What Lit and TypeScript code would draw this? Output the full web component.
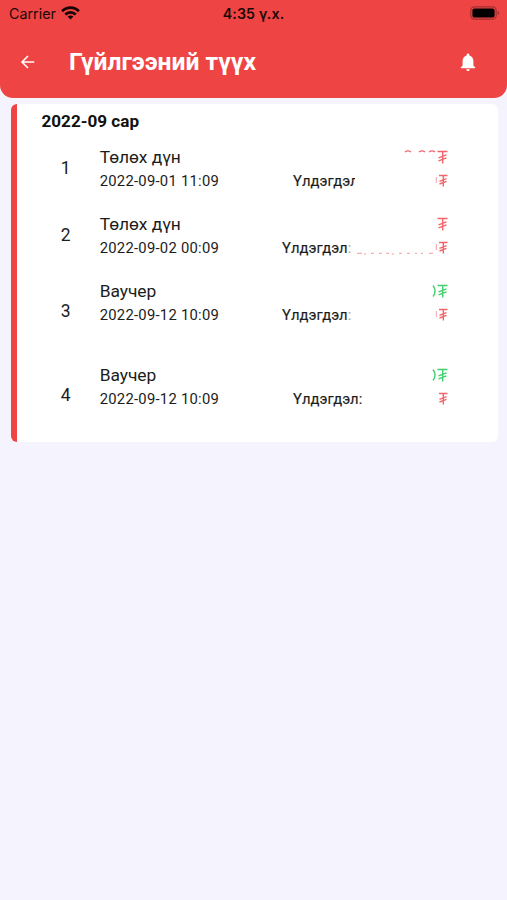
import { LitElement, html, css, svg, nothing } from "lit";
import { customElement, property } from "lit/decorators.js";
import { classMap } from "lit/directives/class-map.js";

interface Entry {
  title: string;
  date: string;
  label: "cut" | "faint" | "full";
  shift: boolean;
  credit: boolean;
  tall: boolean;
  amountTrace: string;
  balanceTrace: string;
}

const entries: Entry[] = [
  { title: "Төлөх дүн", date: "2022-09-01 11:09", label: "cut", shift: true, credit: false, tall: false, amountTrace: "tops", balanceTrace: "edge" },
  { title: "Төлөх дүн", date: "2022-09-02 00:09", label: "faint", shift: false, credit: false, tall: false, amountTrace: "", balanceTrace: "bottoms" },
  { title: "Ваучер", date: "2022-09-12 10:09", label: "faint", shift: false, credit: true, tall: true, amountTrace: "curve", balanceTrace: "edge" },
  { title: "Ваучер", date: "2022-09-12 10:09", label: "full", shift: true, credit: true, tall: true, amountTrace: "curve", balanceTrace: "" },
];

@customElement("status-bar")
class StatusBar extends LitElement {
  static styles = css`
    :host { display: grid; grid-template-columns: 1fr auto 1fr; height: 28px; align-items: center; padding: 0 7px 0 9px; color: #1c0808; }
    .left { display: flex; align-items: center; gap: 6px; font: 400 14.3px/28px Inter, sans-serif; letter-spacing: 0; }
    .time { font: 600 14.2px/28px Inter, sans-serif; letter-spacing: 0.15px; margin-left: -2px; }
    .battery { justify-self: end; margin-top: -2px; }
    svg { display: block; }
    .wifi { margin-top: -2px; margin-left: -1px; }
  `;
  render() {
    return html`
      <div class="left"><span>Carrier</span>
        <svg class="wifi" width="19" height="14" viewBox="0 0 19 14" fill="none" stroke="#180505" stroke-width="2.7">
          <path d="M1.1 5.2C5.8.4 13.2.4 17.9 5.2" /><path d="M4.3 8.5c2.9-2.9 7.5-2.9 10.4 0" />
          <path d="M9.5 13.5 6.6 10.6c1.6-1.5 4.2-1.5 5.8 0z" fill="#180505" stroke="none" />
        </svg></div>
      <span class="time">4:35 ү.х.</span>
      <svg class="battery" width="30" height="14" viewBox="0 0 30 14">
        <rect x=".8" y=".8" width="25.4" height="12.4" rx="3.8" fill="none" stroke="#a12e2e" stroke-width="1.2" />
        <rect x="2.4" y="2.4" width="22.2" height="9.2" rx="2.2" fill="#000" />
        <path d="M27.7 5c1.9.5 1.9 3.5 0 4z" fill="#a12e2e" />
      </svg>`;
  }
}

@customElement("entry-row")
class EntryRow extends LitElement {
  @property({ attribute: false }) entry!: Entry;
  @property({ type: Number }) index = 0;

  static styles = css`
    :host { display: block; }
    .row { display: grid; grid-template-columns: 43.700px 39px 1fr; width: 431px; height: 67px; color: #1c1c1c; }
    .tall { height: 84px; }
    .num { grid-column: 2; align-self: center; font-size: 17.5px; line-height: 24px; padding-bottom: 1px; }
    .body { grid-column: 3; padding-top: 10px; }
    .line { display: flex; justify-content: space-between; height: 24px; line-height: 24px; white-space: nowrap; }
    .title { font-size: 17.4px; letter-spacing: -0.05px; }
    .date { font-size: 14.8px; letter-spacing: 0.26px; }
    .right { display: flex; width: 166px; justify-content: space-between; }
    .shift { width: 155px; }
    .label { position: relative; font-size: 14.8px; letter-spacing: 0.02px; -webkit-text-stroke: 0.15px; }
    .cut::after { content: ""; position: absolute; left: 62px; top: 0; width: 12px; height: 24px; background: #fff; }
    .faint { color: #aaa; }
    .money { display: flex; justify-content: flex-end; align-items: center; color: #f1656a; }
    .credit { color: #42cf6d; }
    svg { display: block; }
  `;

  private trace(kind: string) {
    switch (kind) {
      case "tops":
        return svg`<path d="M2 6q3-2.4 6 0M16 6q3-2.4 6 0M26 6q3-2.4 6 0" stroke-width="1.2" />`;
      case "bottoms":
        return svg`<path d="M-46 16.3h5M-38 16v2M-32 16.3h3M-24 16.3h3M-17 16.3h3M-10 16v2M-4 16.3h3M4 16.3h3M12 16.3h2M18 16.3h2M26 16.3h4M33.3 7v6" opacity=".65" />`;
      case "edge":
        return svg`<path d="M33.3 7v6" opacity=".6" />`;
      case "curve":
        return svg`<path d="M30 5.5q4 5.5 0 11" stroke-width="1.4" />`;
      default:
        return nothing;
    }
  }

  private money(kind: string, credit: boolean, small: boolean) {
    return html`<span class=${classMap({ money: true, credit })}>
      <svg width="45" height="22" viewBox="0 0 45 22" overflow="visible" fill="none" stroke="currentColor" stroke-width="1">
        ${this.trace(kind)}
        <path d=${small
          ? "M36 5.5h8.5M40.3 5.5v11M36.5 11.3l7-2.7M36.5 14l7-2.7"
          : "M34.5 5.5h10M39.7 5.5v12M35.5 11.8l8-3M35.5 14.8l8-3"} stroke-width="1.4" />
      </svg></span>`;
  }

  render() {
    const e = this.entry;
    return html`<div class=${classMap({ row: true, tall: e.tall })}>
      <div class="num">${this.index}</div>
      <div class="body">
        <div class="line"><span class="title">${e.title}</span>${this.money(e.amountTrace, e.credit, false)}</div>
        <div class="line"><span class="date">${e.date}</span>
          <div class=${classMap({ right: true, shift: e.shift })}>
            <span class=${classMap({ label: true, cut: e.label === "cut" })}>Үлдэгдэл<span class=${classMap({ faint: e.label === "faint" })}>${e.label === "cut" ? "" : ":"}</span></span>
            ${this.money(e.balanceTrace, false, true)}
          </div></div>
      </div></div>`;
  }
}

@customElement("app-root")
class AppRoot extends LitElement {
  static styles = css`
    :host { display: block; box-sizing: border-box; height: 900px; overflow: hidden; background: #f5f4fe; font-family: Roboto, sans-serif; }
    header { height: 98px; background: #ef4444; border-radius: 0 0 13px 13px; }
    nav { display: flex; align-items: center; height: 68px; padding: 0 30px 0 20px; color: #fff; }
    h1 { flex: 1; margin: 0 0 1px 33px; font-size: 24.7px; line-height: 34px; font-weight: 700; }
    h2 { margin: 0; padding: 7px 0 0 24.5px; height: 24px; font-size: 17.1px; line-height: 21px; font-weight: 700; color: #111; }
    .card { box-sizing: border-box; margin: 6px 9px 0 11px; height: 338px; border-left: 6px solid #ef4444; border-radius: 6px; background: #fff; }
    nav svg { display: block; }
  `;
  render() {
    return html`
      <header>
        <status-bar></status-bar>
        <nav>
          <svg width="16" height="16" viewBox="0 0 16 16" fill="none" stroke="#fff" stroke-width="1.6"><path d="M14.3 8H2.2M8 2 2 8l6 6" /></svg>
          <h1>Гүйлгээний түүх</h1>
          <svg width="18" height="18" viewBox="2 2 20 20" fill="#fff"><path d="M12 22c1.1 0 2-.9 2-2h-4c0 1.1.9 2 2 2zm6-6v-5c0-3.07-1.63-5.64-4.5-6.32V4c0-.83-.67-1.5-1.5-1.5s-1.5.67-1.5 1.5v.68C7.64 5.36 6 7.92 6 11v5l-2 2v1h16v-1l-2-2z" /></svg>
        </nav>
      </header>
      <main class="card">
        <h2>2022-09 сар</h2>
        ${entries.map((e, i) => html`<entry-row .entry=${e} .index=${i + 1}></entry-row>`)}
      </main>`;
  }
}
